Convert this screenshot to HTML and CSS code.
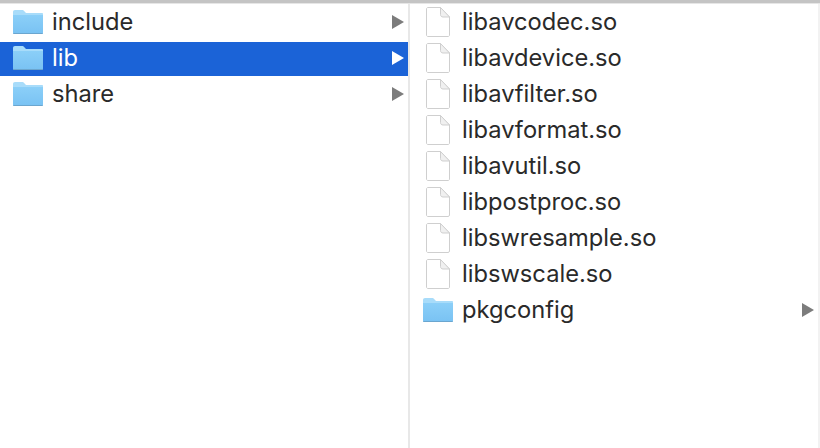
FILE: index.html
```html
<!DOCTYPE html>
<html lang="en">

<head>
    <meta charset="UTF-8">
    <title>lib</title>
    <link rel="stylesheet" href="styles.css">
</head>

<body>
    <svg class="defs" width="0" height="0">
        <defs>
            <linearGradient id="folderFront" x1="0" y1="0" x2="0" y2="1">
                <stop offset="0" stop-color="#8bcff8" />
                <stop offset="1" stop-color="#79c2f3" />
            </linearGradient>
            <symbol id="folder" viewBox="0 0 30 24">
                <path d="M0 2C0 .8.800 0 2 0h7c1 0 1.500.3 2.100.9L13 3h16c.6 0 1 .4 1 1v4H0z" fill="#a8dcfa" />
                <path d="M0 5h30v17.500c0 .9-.6 1.500-1.500 1.500h-27C.6 24 0 23.400 0 22.500z" fill="url(#folderFront)" />
                <path d="M0 23h30c0 .6-.6 1-1.500 1h-27C.6 24 0 23.600 0 23z" fill="#6ba6cf" />
            </symbol>
            <symbol id="file" viewBox="0 0 24 30">
                <path d="M2 .5h12.500l9 9.500v18c0 .9-.6 1.500-1.500 1.500H2C1.100 29.500.5 28.900.5 28V2C.5 1.100 1.100.5 2 .5z" fill="#fff" stroke="#cfcfcf" />
                <path d="M14.500.5V7.500c0 1.500 1 2.500 2.500 2.500h6.500z" fill="#f0f0f0" stroke="#cfcfcf" />
            </symbol>
        </defs>
    </svg>

    <div class="topbar"></div>
    <div class="browser">
        <ul class="column first">
            <li class="row">
                <svg class="icon folder"><use href="#folder" /></svg>
                <span class="name">include</span>
                <span class="arrow"></span>
            </li>
            <li class="row selected">
                <svg class="icon folder"><use href="#folder" /></svg>
                <span class="name">lib</span>
                <span class="arrow"></span>
            </li>
            <li class="row">
                <svg class="icon folder"><use href="#folder" /></svg>
                <span class="name">share</span>
                <span class="arrow"></span>
            </li>
        </ul>
        <ul class="column second">
            <li class="row">
                <svg class="icon file"><use href="#file" /></svg>
                <span class="name">libavcodec.so</span>
            </li>
            <li class="row">
                <svg class="icon file"><use href="#file" /></svg>
                <span class="name">libavdevice.so</span>
            </li>
            <li class="row">
                <svg class="icon file"><use href="#file" /></svg>
                <span class="name">libavfilter.so</span>
            </li>
            <li class="row">
                <svg class="icon file"><use href="#file" /></svg>
                <span class="name">libavformat.so</span>
            </li>
            <li class="row">
                <svg class="icon file"><use href="#file" /></svg>
                <span class="name">libavutil.so</span>
            </li>
            <li class="row">
                <svg class="icon file"><use href="#file" /></svg>
                <span class="name">libpostproc.so</span>
            </li>
            <li class="row">
                <svg class="icon file"><use href="#file" /></svg>
                <span class="name">libswresample.so</span>
            </li>
            <li class="row">
                <svg class="icon file"><use href="#file" /></svg>
                <span class="name">libswscale.so</span>
            </li>
            <li class="row">
                <svg class="icon folder"><use href="#folder" /></svg>
                <span class="name">pkgconfig</span>
                <span class="arrow"></span>
            </li>
        </ul>
        <div class="gutter"></div>
    </div>
</body>

</html>
```

FILE: styles.css
```css
html,
body {
    height: 100%;
}

body {
    font-family: Inter, "Liberation Sans", Arial, sans-serif;
    background-color: #fff;
    color: #2a2a2a;
    margin: 0;
    display: flex;
    flex-direction: column;
    overflow: hidden;
}

.defs {
    flex: none;
}

.topbar {
    flex: none;
    height: 4px;
    background-color: #c4c4c4;
    border-bottom: 1px solid #e6e6e6;
    box-sizing: border-box;
}

.browser {
    flex: 1;
    display: flex;
}

.column {
    list-style: none;
    margin: 0;
    padding: 2px 0 0;
}

.first {
    width: 408px;
    border-right: 2px solid #e8e8e8;
}

.second {
    flex: 1;
}

.gutter {
    width: 2px;
    background-color: #f2f2f2;
}

.row {
    height: 34px;
    box-sizing: border-box;
    padding-bottom: 2px;
    margin-bottom: 2px;
    display: flex;
    align-items: center;
    font-size: 23.7px;
}

.selected {
    background-color: #1b63d7;
    color: #fff;
}

.icon {
    flex: none;
}

.folder {
    width: 30px;
    height: 24px;
    margin-left: 13px;
}

.file {
    width: 24px;
    height: 30px;
    margin-left: 16px;
    margin-right: 3px;
}

.name {
    flex: 1;
    margin-left: 9px;
    margin-bottom: 2px;
}

.arrow {
    width: 0;
    height: 0;
    margin-right: 4px;
    border-left: 12px solid #7c7c7c;
    border-top: 7px solid transparent;
    border-bottom: 7px solid transparent;
}

.selected .arrow {
    border-left-color: #fff;
}
```
